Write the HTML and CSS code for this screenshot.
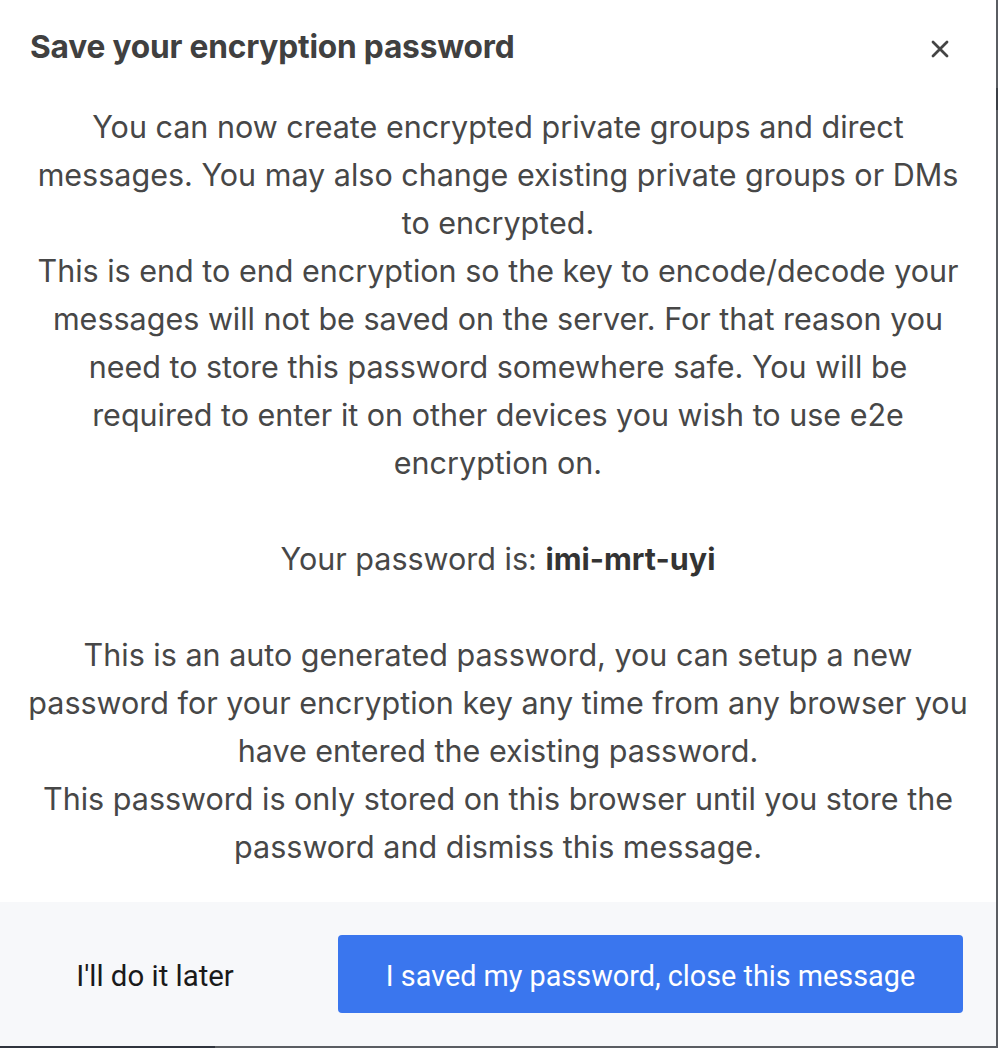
FILE: index.html
```html
<!DOCTYPE html>
<html lang="en">
<head>
<meta charset="utf-8">
<title>Save your encryption password</title>
<link rel="stylesheet" href="styles.css">
</head>
<body>
<div class="backdrop">
  <div class="modal">
    <header class="modal-header">
      <h2 class="modal-title">Save your encryption password</h2>
      <button class="close-btn" aria-label="Close">
        <svg width="20" height="20" viewBox="0 0 20 20"><path d="M3 3 L17 17 M17 3 L3 17" stroke="#444" stroke-width="2.8" stroke-linecap="round"/></svg>
      </button>
    </header>
    <div class="modal-body">
      You can now create encrypted private groups and direct messages. You may also change existing private groups or DMs to encrypted.<br>
      This is end to end encryption so the key to encode/decode your messages will not be saved on the server. For that reason you need to store this password somewhere safe. You will be required to enter it on other devices you wish to use e2e encryption on.<br><br>
      Your password is: <b>imi-mrt-uyi</b><br><br>
      This is an auto generated password, you can setup a new password for your encryption key any time from any browser you have entered the existing password.<br>
      This password is only stored on this browser until you store the password and dismiss this message.
    </div>
    <footer class="modal-footer">
      <button class="btn-later">I'll do it later</button>
      <button class="btn-primary">I saved my password, close this message</button>
    </footer>
  </div>
</div>
</body>
</html>
```
FILE: styles.css
```css
html, body {
  margin: 0;
  padding: 0;
}
body {
  width: 998px;
  height: 1048px;
  background: #5a5d62;
  overflow: hidden;
}
.backdrop {
  width: 998px;
  height: 1048px;
  background:
    linear-gradient(#2f343d, #2f343d) 0 1046px / 215px 2px no-repeat,
    linear-gradient(#3b3f45, #3b3f45) 996px 88px / 2px 22px no-repeat,
    #5a5d62;
}
.modal {
  width: 996px;
  height: 1046px;
  background: #fff;
  display: flex;
  flex-direction: column;
  font-family: Inter, "Noto Sans", sans-serif;
  color: #474747;
}
.modal-header {
  display: flex;
  align-items: center;
  justify-content: space-between;
  padding: 29px 46px 0 30px;
  height: 36px;
}
.modal-title {
  margin: 0;
  font-size: 31.7px;
  font-weight: 700;
  line-height: 36px;
  color: #404040;
  letter-spacing: -0.2px;
}
.close-btn {
  border: 0;
  background: none;
  padding: 0;
  width: 20px;
  height: 20px;
  margin-top: 4px;
  display: flex;
}
.modal-body {
  margin-top: 38px;
  padding: 0 28px;
  text-align: center;
  font-size: 30.5px;
  line-height: 48px;
  flex: 1;
}
.modal-body b {
  font-weight: 700;
  color: #333;
}
.modal-footer {
  background: #f7f8fa;
  height: 144px;
  display: flex;
  align-items: center;
  padding: 0 33px 0 30px;
  box-sizing: border-box;
}
.btn-later {
  border: 0;
  background: none;
  font-family: Roboto, sans-serif;
  font-size: 29.4px;
  color: #1a1a1a;
  width: 250px;
  padding: 4px 0 0;
  text-align: center;
  margin-right: 58px;
}
.btn-primary {
  border: 0;
  border-radius: 4px;
  background: #3a76ee;
  color: #fff;
  font-family: Roboto, sans-serif;
  font-size: 28.8px;
  height: 78px;
  padding-top: 4px;
  flex: 1;
}
```
